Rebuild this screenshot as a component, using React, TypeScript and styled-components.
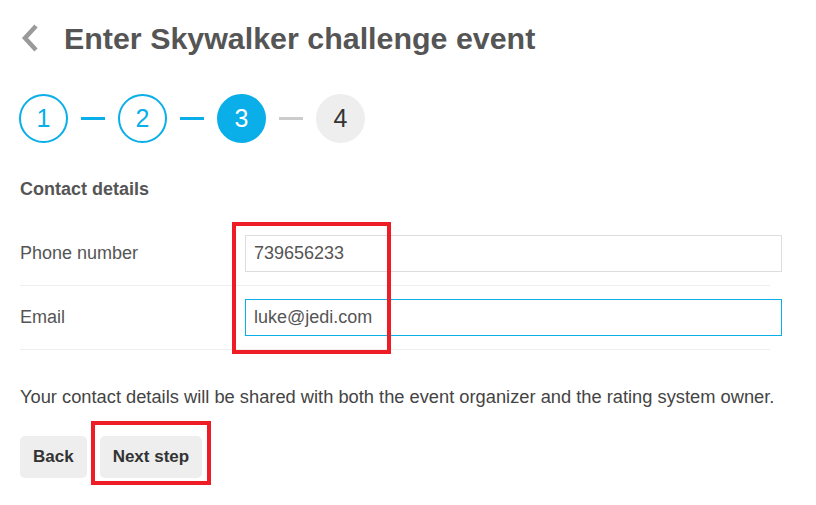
import React from "react";
import styled, { createGlobalStyle } from "styled-components";

const Global = createGlobalStyle`
  html, body { margin: 0; padding: 0; background: #fff; }
  body { font-family: "Liberation Sans", Arial, sans-serif; color: #444; }
  * { box-sizing: border-box; }
`;

const Page = styled.div`
  position: relative;
  width: 816px;
  height: 505px;
  padding: 0 20px;
  overflow: hidden;
`;

const Header = styled.div`
  display: flex;
  align-items: center;
  height: 76px;
  gap: 25px;
`;

const BackChevron = styled.span`
  width: 19px;
  height: 28px;
  display: flex;
  align-items: center;
`;

const Title = styled.h1`
  margin: 0;
  font-size: 30.4px;
  font-weight: bold;
  color: #555;
`;

const Steps = styled.div`
  display: flex;
  align-items: center;
  gap: 13px;
  margin-top: 18px;
  margin-left: -1px;
`;

const Step = styled.div<{ $state: "done" | "active" | "todo" }>`
  width: 49px;
  height: 49px;
  border-radius: 50%;
  display: flex;
  align-items: center;
  justify-content: center;
  font-size: 25px;
  border: 2px solid
    ${(p) => (p.$state === "todo" ? "#eeeeee" : "#0aaee8")};
  background: ${(p) =>
    p.$state === "active" ? "#0aaee8" : p.$state === "todo" ? "#eeeeee" : "#fff"};
  color: ${(p) =>
    p.$state === "active" ? "#fff" : p.$state === "todo" ? "#333" : "#0aaee8"};
`;

const Connector = styled.div<{ $done: boolean }>`
  width: 24px;
  height: 3px;
  background: ${(p) => (p.$done ? "#0aaee8" : "#cccccc")};
`;

const SectionTitle = styled.h2`
  margin: 36px 0 0;
  font-size: 18px;
  font-weight: bold;
  color: #555;
  line-height: 20px;
`;

const Form = styled.div`
  margin-top: 23px;
  width: 750px;
`;

const Row = styled.div`
  display: flex;
  align-items: center;
  padding: 13px 0 13px;
  border-bottom: 1px solid #eeeeee;
`;

const Label = styled.label`
  width: 225px;
  flex: none;
  font-size: 18px;
  color: #555;
`;

const InputBox = styled.div<{ $focused?: boolean }>`
  width: 537px;
  height: 37px;
  flex: none;
  display: flex;
  background: #fff;
  box-shadow: inset 0 0 0 1px ${(p) => (p.$focused ? "#0aaee8" : "#dddddd")};
`;

const Input = styled.input`
  flex: 1;
  min-width: 0;
  height: 100%;
  padding: 0 9px;
  font-family: "Liberation Sans", Arial, sans-serif;
  font-size: 18px;
  color: #555;
  border: none;
  outline: none;
  background: transparent;
`;

const Note = styled.p`
  margin: 36px 0 0;
  font-size: 18.3px;
  color: #444;
`;

const Buttons = styled.div`
  display: flex;
  gap: 13px;
  margin-top: 28px;
`;

const Button = styled.button`
  height: 42px;
  padding: 0 13px;
  border: none;
  border-radius: 5px;
  background: #eeeeee;
  font-family: "Liberation Sans", Arial, sans-serif;
  font-size: 17px;
  font-weight: bold;
  color: #333;
`;

const Highlight = styled.div<{ $x: number; $y: number; $w: number; $h: number }>`
  position: absolute;
  left: ${(p) => p.$x}px;
  top: ${(p) => p.$y}px;
  width: ${(p) => p.$w}px;
  height: ${(p) => p.$h}px;
  border: 4px solid #ee1c25;
  pointer-events: none;
`;

export default function App() {
  return (
    <>
      <Global />
      <Page>
        <Header>
          <BackChevron>
            <svg width="19" height="28" viewBox="0 0 19 28">
              <path d="M16 2 L5 14 L16 26" fill="none" stroke="#9a9a9a" strokeWidth="4.5" />
            </svg>
          </BackChevron>
          <Title>Enter Skywalker challenge event</Title>
        </Header>
        <Steps>
          <Step $state="done">1</Step>
          <Connector $done />
          <Step $state="done">2</Step>
          <Connector $done />
          <Step $state="active">3</Step>
          <Connector $done={false} />
          <Step $state="todo">4</Step>
        </Steps>
        <SectionTitle>Contact details</SectionTitle>
        <Form>
          <Row>
            <Label>Phone number</Label>
            <InputBox>
              <Input defaultValue="739656233" />
            </InputBox>
          </Row>
          <Row>
            <Label>Email</Label>
            <InputBox $focused>
              <Input defaultValue="luke@jedi.com" />
            </InputBox>
          </Row>
        </Form>
        <Note>
          Your contact details will be shared with both the event organizer and the rating system owner.
        </Note>
        <Buttons>
          <Button>Back</Button>
          <Button>Next step</Button>
        </Buttons>
        <Highlight $x={232} $y={222} $w={159} $h={132} />
        <Highlight $x={91} $y={421} $w={120} $h={64} />
      </Page>
    </>
  );
}
